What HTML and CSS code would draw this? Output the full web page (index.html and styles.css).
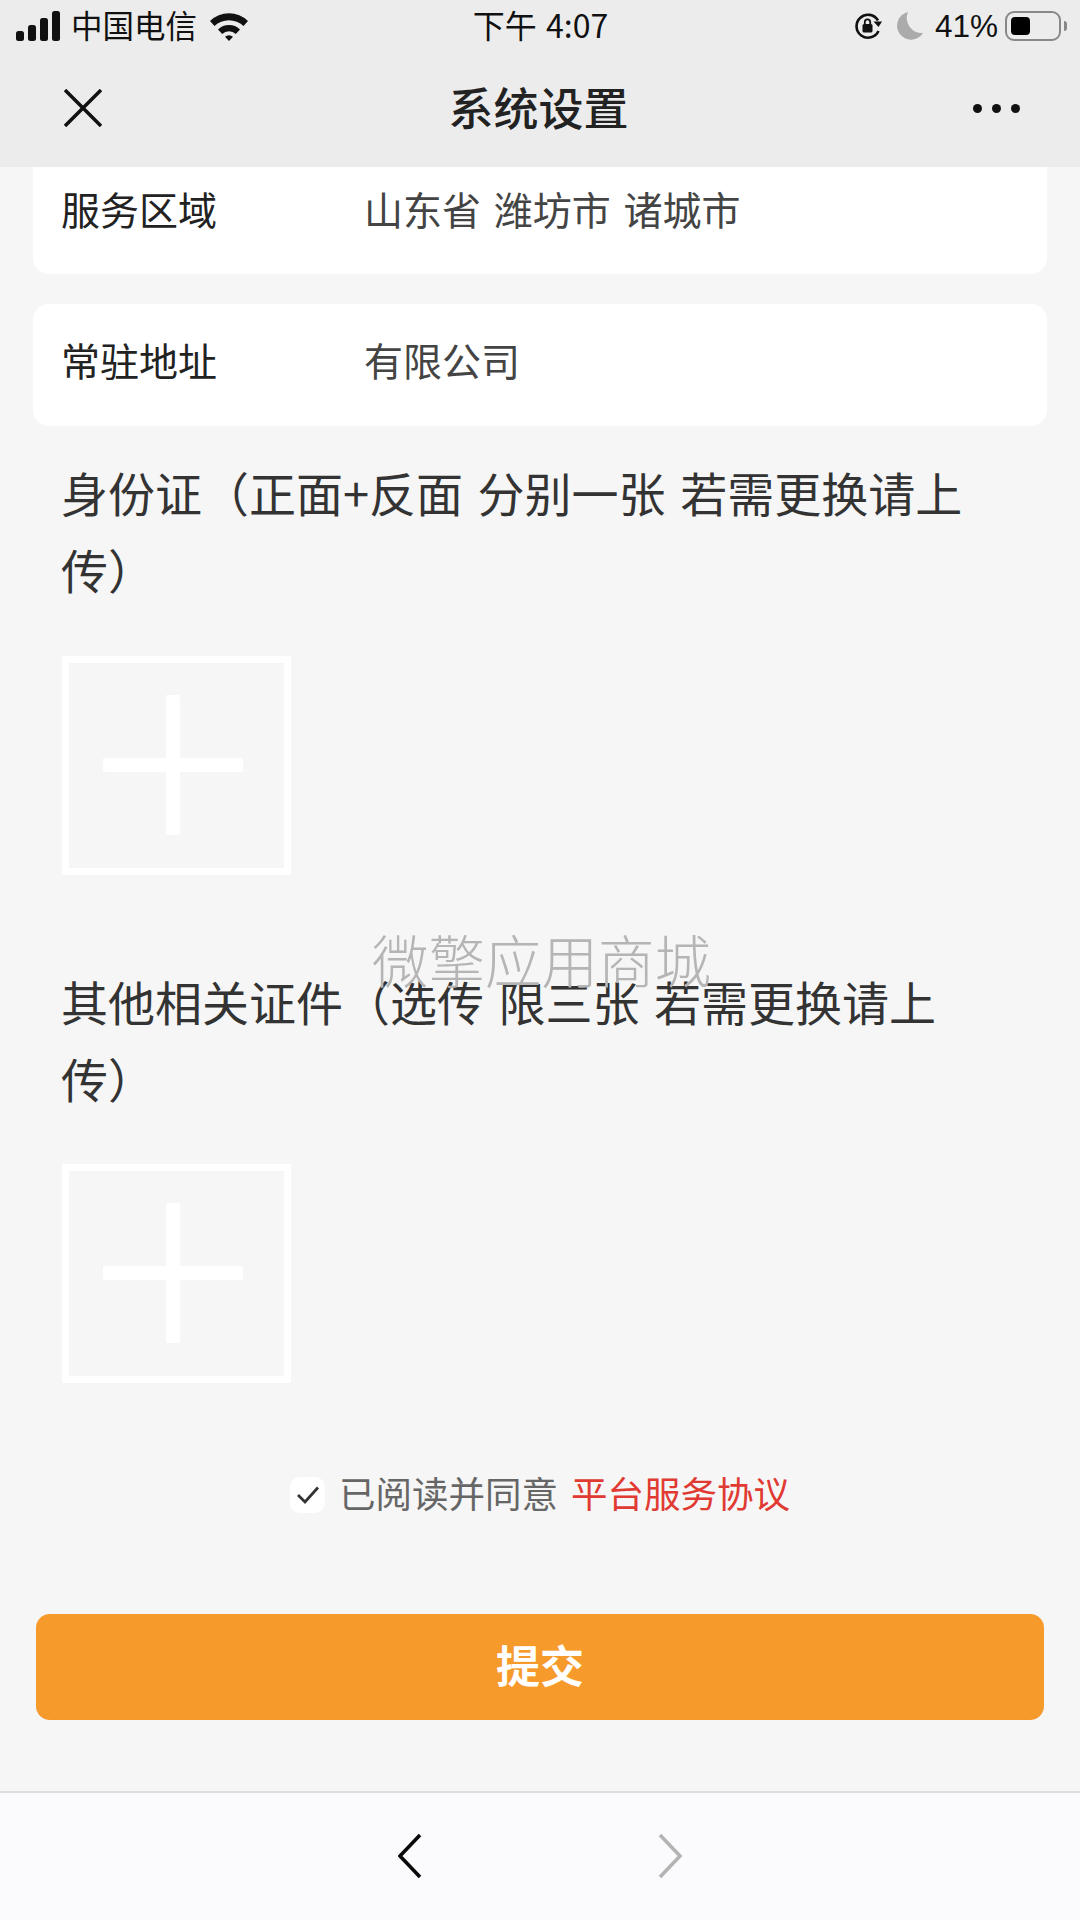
FILE: index.html
```html
<!doctype html>
<html lang="zh-CN">

<head>
  <meta charset="UTF-8">
  <title>系统设置</title>
  <link rel="stylesheet" href="styles.css">
</head>

<body>
  <div class="page">

    <header class="top">
      <div class="status">
        <div class="status-left">
          <svg class="signal" width="44" height="30" viewBox="0 0 44 30">
            <rect x="0" y="20" width="8" height="10" rx="2.5" />
            <rect x="12" y="14" width="8" height="16" rx="2.5" />
            <rect x="24" y="7" width="8" height="23" rx="2.5" />
            <rect x="36" y="0" width="8" height="30" rx="2.5" />
          </svg>
          <span class="carrier">中国电信</span>
          <svg class="wifi" width="40" height="30" viewBox="0 0 40 30">
            <path d="M1 10 A27 27 0 0 1 39 10 L34.5 15 A21 21 0 0 0 5.5 15 Z" />
            <path d="M9 18.500 A16 16 0 0 1 31 18.500 L26.800 23 A10 10 0 0 0 13.200 23 Z" />
            <path d="M16 25.800 A6 6 0 0 1 24 25.800 L20 30 Z" />
          </svg>
        </div>
        <div class="clock">下午 4:07</div>
        <div class="status-right">
          <svg class="lock" width="28" height="28" viewBox="0 0 28 28">
            <path d="M24 8.500 A11.500 11.500 0 1 0 24.500 19" fill="none" stroke="#111" stroke-width="2.600" />
            <path d="M19.500 9.500 L28 9.500 L24.500 15 Z" fill="#111" />
            <rect x="8.500" y="12" width="10" height="8.500" rx="1.500" fill="#111" />
            <path d="M10.800 12 V10 A2.700 2.700 0 0 1 16.200 10 V12" fill="none" stroke="#111" stroke-width="1.800" />
          </svg>
          <svg class="moon" width="26" height="28" viewBox="0 0 26 28">
            <path d="M11 0 A14 14 0 1 0 26 21 A15 15 0 0 1 11 0 Z" fill="#ababab" />
          </svg>
          <span class="percent">41%</span>
          <div class="battery"><div class="battery-level"></div></div>
          <div class="battery-nub"></div>
        </div>
      </div>
      <div class="nav">
        <svg class="nav-close" width="38" height="38" viewBox="0 0 38 38">
          <path d="M1 1 L37 37 M37 1 L1 37" stroke="#111" stroke-width="3.500" fill="none" />
        </svg>
        <h1 class="nav-title">系统设置</h1>
        <div class="nav-more"><i></i><i></i><i></i></div>
      </div>
    </header>

    <main class="content">
      <div class="card card-cut">
        <span class="card-label">服务区域</span>
        <span class="card-value">山东省 潍坊市 诸城市</span>
      </div>
      <div class="card card-address">
        <span class="card-label">常驻地址</span>
        <span class="card-value">有限公司</span>
      </div>

      <p class="upload-title">身份证（正面+反面 分别一张 若需更换请上传）</p>
      <div class="upload-box">
        <svg width="140" height="140" viewBox="0 0 140 140">
          <path d="M3 70 H137 M70 3 V137" stroke="#fff" stroke-width="14" stroke-linecap="round" fill="none" />
        </svg>
      </div>

      <p class="upload-title upload-title-next">其他相关证件（选传 限三张 若需更换请上传）</p>
      <div class="upload-box upload-box-next">
        <svg width="140" height="140" viewBox="0 0 140 140">
          <path d="M3 70 H137 M70 3 V137" stroke="#fff" stroke-width="14" stroke-linecap="round" fill="none" />
        </svg>
      </div>

      <div class="agree">
        <span class="agree-check">
          <svg width="24" height="20" viewBox="0 0 24 20">
            <path d="M2 10 L9 17 L22 2.500" fill="none" stroke="#333" stroke-width="2.800" />
          </svg>
        </span>
        <span class="agree-text">已阅读并同意</span>
        <span class="agree-link">平台服务协议</span>
      </div>

      <button class="submit">提交</button>
    </main>

    <footer class="bottom">
      <svg width="24" height="46" viewBox="0 0 24 46">
        <path d="M22 2 L2 23 L22 44" fill="none" stroke="#0a0a0a" stroke-width="3.600" />
      </svg>
      <svg width="24" height="46" viewBox="0 0 24 46">
        <path d="M2 2 L22 23 L2 44" fill="none" stroke="#b4b4b4" stroke-width="3.600" />
      </svg>
    </footer>

    <div class="watermark">微擎应用商城</div>
  </div>
</body>

</html>
```

FILE: styles.css
```css
* {
  margin: 0;
  padding: 0;
  box-sizing: border-box;
}

body {
  font-family: "Noto Sans CJK SC", "Noto Sans", sans-serif;
  color: #333;
}

.page {
  position: relative;
  width: 1080px;
  height: 1920px;
  overflow: hidden;
  display: flex;
  flex-direction: column;
  background: #f6f6f6;
}

/* top bar */
.top {
  height: 167px;
  flex: none;
  background: #ececec;
}

.status {
  height: 52px;
  padding: 0 13px 0 16px;
  display: grid;
  grid-template-columns: 1fr auto 1fr;
  align-items: center;
  color: #111;
}

.status-left,
.status-right {
  display: flex;
  align-items: center;
}

.status-right {
  justify-content: flex-end;
}

.signal,
.wifi {
  fill: #111;
}

.carrier {
  margin: 0 0 4px 11px;
  font-size: 31.500px;
  line-height: 40px;
}

.wifi {
  margin-left: 12px;
}

.clock {
  margin: 0 2px 4px 0;
  font-size: 32px;
  line-height: 40px;
  word-spacing: 2px;
}

.moon {
  margin-left: 15px;
}

.percent {
  margin-left: 12px;
  font-family: "Liberation Sans", sans-serif;
  font-size: 31.500px;
  line-height: 40px;
}

.battery {
  width: 56px;
  height: 30px;
  margin-left: 7px;
  padding: 4px;
  border: 2px solid #888;
  border-radius: 9px;
}

.battery-level {
  width: 19px;
  height: 100%;
  border-radius: 4px;
  background: #000;
}

.battery-nub {
  width: 3px;
  height: 10px;
  margin-left: 3px;
  border-radius: 0 3px 3px 0;
  background: #888;
}

.nav {
  height: 115px;
  padding: 0 60px 3px 64px;
  display: flex;
  align-items: center;
  justify-content: space-between;
}

.nav-title {
  margin: 0 0 3px 2px;
  font-size: 45px;
  font-weight: 500;
  line-height: 60px;
  color: #222;
}

.nav-more {
  display: flex;
  gap: 10px;
}

.nav-more i {
  display: block;
  width: 9px;
  height: 9px;
  border-radius: 50%;
  background: #111;
}

/* form */
.content {
  flex: 1;
  padding: 0 33px;
}

.card {
  display: flex;
  align-items: center;
  padding: 0 29px 12px 28px;
  background: #fff;
  border-radius: 16px;
  font-size: 39px;
  word-spacing: 4px;
}

.card-cut {
  height: 107px;
  padding-bottom: 26px;
  border-radius: 0 0 16px 16px;
}

.card-address {
  height: 122px;
  margin-top: 30px;
}

.card-label {
  width: 303px;
  color: #222;
}

.card-value {
  color: #444;
}

.upload-title {
  width: 930px;
  margin: 27px 0 0 28px;
  font-size: 47px;
  line-height: 77px;
  word-spacing: 4px;
  color: #333;
}

.upload-title-next {
  margin-top: 87px;
}

.upload-box {
  width: 229px;
  height: 219px;
  margin: 49px 0 0 29px;
  padding-top: 32px;
  padding-left: 34px;
  border: 7px solid #fff;
}

.upload-box-next {
  margin-top: 48px;
}

.upload-box svg {
  display: block;
}

.agree {
  display: flex;
  align-items: center;
  height: 40px;
  margin-top: 92px;
  padding-left: 257px;
  font-size: 36.500px;
}

.agree-check {
  width: 35px;
  height: 36px;
  display: flex;
  align-items: center;
  justify-content: center;
  background: #fff;
  border-radius: 10px;
}

.agree-text {
  margin: 0 0 5px 14px;
  color: #666;
}

.agree-link {
  margin: 0 0 5px 13px;
  color: #e03a33;
}

.submit {
  display: block;
  width: 1008px;
  height: 106px;
  margin: 99px 0 0 3px;
  padding-bottom: 7px;
  border: 0;
  border-radius: 14px;
  background: #f79a2c;
  color: #fff;
  font-family: inherit;
  font-size: 44px;
  font-weight: 700;
}

/* bottom toolbar */
.bottom {
  height: 129px;
  flex: none;
  display: flex;
  align-items: flex-start;
  justify-content: center;
  gap: 236px;
  padding-top: 40px;
  background: #fbfbfd;
  border-top: 2px solid #dedede;
}

.watermark {
  position: absolute;
  left: 372px;
  top: 918px;
  font-size: 56.500px;
  font-weight: 300;
  line-height: 80px;
  color: #b5b5b5;
}
```
